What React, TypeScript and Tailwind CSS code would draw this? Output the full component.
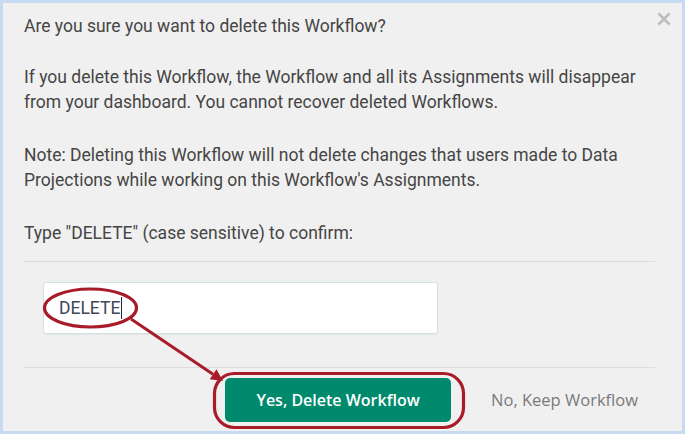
import React from "react"

const body = "font-['Roboto',sans-serif] text-[17.5px] leading-[25px] text-[#454545]"

export default function App() {
  return (
    <div className="relative w-[685px] h-[434px] border-[3px] border-[#c6daf2] bg-[#f0f0f0] overflow-hidden">
      {/* close */}
      <button className="absolute right-[11px] top-[9px] w-[14px] h-[14px] flex items-center justify-center">
        <svg width="14" height="14" viewBox="0 0 14 14">
          <path d="M1.5 1.5 L12.5 12.5 M12.5 1.5 L1.5 12.5" stroke="#bdbdbd" strokeWidth="2.6" strokeLinecap="butt" />
        </svg>
      </button>

      <div className="pl-[21px] pr-[27px] pt-[11px]">
        <p className={body}>Are you sure you want to delete this Workflow?</p>
        <p className={`${body} mt-[26px]`}>
          If you delete this Workflow, the Workflow and all its Assignments will disappear from your dashboard. You cannot recover deleted Workflows.
        </p>
        <p className={`${body} mt-[28px]`}>
          Note: Deleting this Workflow will not delete changes that users made to Data Projections while working on this Workflow's Assignments.
        </p>
        <p className={`${body} mt-[28px]`}>Type "DELETE" (case sensitive) to confirm:</p>

        <div className="mt-[15px] border-t border-[#dcdcdc] pt-[20px] pb-[33px] pl-[19px]">
          <div className="w-[395px] h-[52px] bg-white border border-[#cfe3df] rounded-[3px] flex items-center pl-[15px] shadow-[0_1px_1px_rgba(0,0,0,0.04)]">
            <span className="font-['Roboto',sans-serif] text-[17.5px] text-[#3e4756] border-r border-[#1f2733] pr-[1px] leading-[22px]">
              DELETE
            </span>
          </div>
        </div>

        <div className="border-t border-[#dcdcdc] pt-[10px] flex items-center justify-end pr-[17px] gap-[40px]">
          <button className="w-[226px] h-[44px] rounded-[5px] bg-[#008a6d] text-white font-['Open_Sans',sans-serif] font-semibold text-[16px]">
            Yes, Delete Workflow
          </button>
          <button className="font-['Open_Sans',sans-serif] text-[16.5px] text-[#7a7a7a]">No, Keep Workflow</button>
        </div>
      </div>

      {/* annotation overlay */}
      <svg className="absolute left-[-3px] top-[-3px] pointer-events-none" width="685" height="434" viewBox="0 0 685 434">
        <ellipse cx="90.5" cy="308" rx="46" ry="19" fill="none" stroke="#a81c2a" strokeWidth="3.2" />
        <line x1="131" y1="319" x2="213" y2="374.3" stroke="#a81c2a" strokeWidth="3" />
        <polygon points="223,381 216.5,369.3 209.7,379.3" fill="#a81c2a" />
        <rect x="214.5" y="373.5" width="249" height="54" rx="20" fill="none" stroke="#a81c2a" strokeWidth="3.2" />
      </svg>
    </div>
  )
}
